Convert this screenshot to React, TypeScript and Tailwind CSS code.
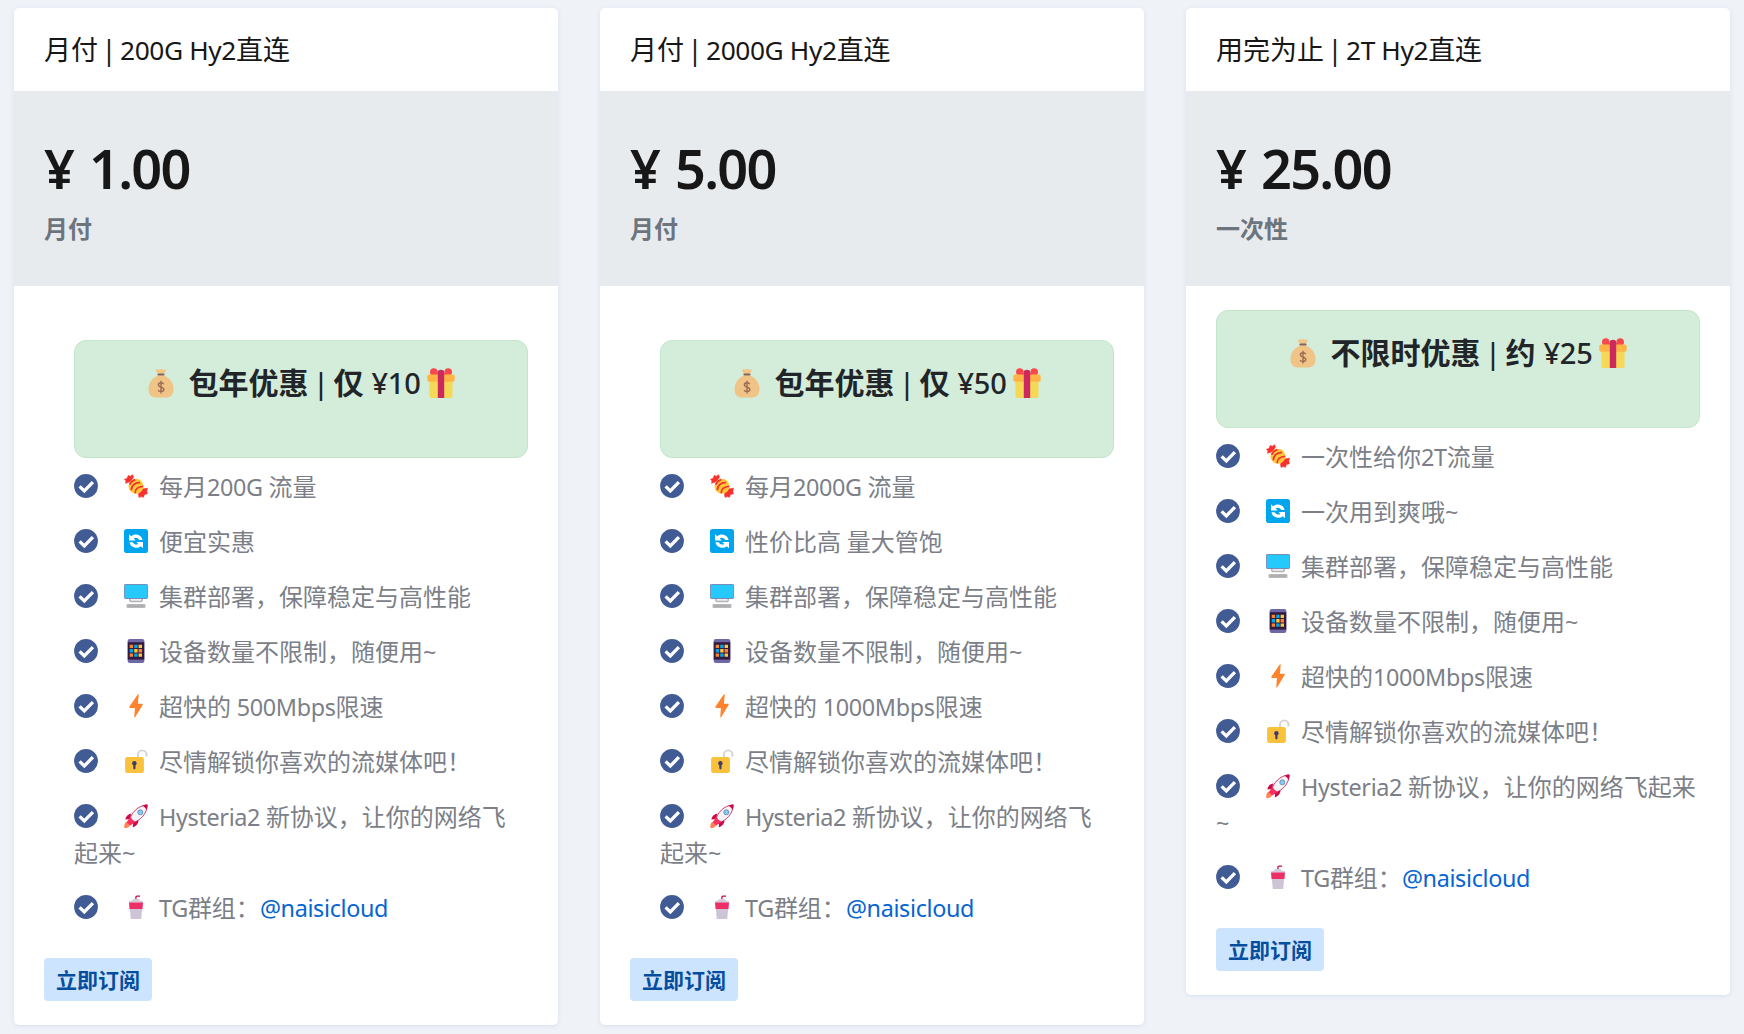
import React from "react";

type EmojiName = "candy" | "cycle" | "desktop" | "phone" | "bolt" | "lock" | "rocket" | "cup";

const CheckIcon = () => (
  <svg viewBox="0 0 24 24" className="inline-block size-6 shrink-0 align-middle">
    <circle cx="12" cy="12" r="11.9" fill="#415b94" />
    <path d="M5.6 12.4 10.3 17l8.6-8.8" fill="none" stroke="#fff" strokeWidth="3.3" />
  </svg>
);

const emojiArt: Record<EmojiName, React.ReactNode> = {
  candy: (
    <>
      <path d="M.5 5.200 3 4.500 4.200 1.500 6.300 2.300 8.500.7 9.500 3 7 7 4 8.600 1.500 9.200 2 7z" fill="#f8312f" strokeLinejoin="round" stroke="#f8312f" strokeWidth=".6" />
      <path d="M15.500 17 18 15l5.500-.8-.7 3 .6 2.600-3 .8-1 2.700-2.400-.7-2 .8-.5-3.400z" fill="#f8312f" strokeLinejoin="round" stroke="#f8312f" strokeWidth=".6" />
      <circle cx="12" cy="12.300" r="7.500" fill="#fcc93a" />
      <path d="M5.600 10.800C6.500 8.300 8.300 6.500 11.200 5.600M7.300 16.200C7.500 11.600 10.500 8.900 16 8.400M11.200 19.200c-.3-4 2.500-6.700 8-6.900" fill="none" stroke="#f8312f" strokeWidth="1.700" />
    </>
  ),
  cycle: (
    <>
      <rect width="24" height="24" rx="2.8" fill="#00a6ed" />
      <path d="M5 5.2 7.2 7.2C10.4 4.5 16 5 18 9.2l.5 1.8h-3.2C14 8.7 11.6 8 9.6 9.3l2 2.1H5z" fill="#fff" />
      <path d="m19 19.2-2.2-2C13.6 19.8 8 19.2 6 15l-.5-1.8h3.2c1.3 2.4 3.7 3 5.7 1.8l-2-2.1H19z" fill="#fff" />
    </>
  ),
  desktop: (
    <>
      <path d="M5 14h14v2.6l-1.2 1.7H6.2L5 16.6z" fill="#b4b4ba" />
      <path d="M6.5 14h11v2.7h-11z" fill="#eeeef2" />
      <rect x=".4" y=".5" width="23.2" height="14" rx=".8" fill="#26c9fc" stroke="#7277a5" strokeWidth=".8" />
      <rect x="2.5" y="20" width="19" height="4" rx="1" fill="#b9b9bb" />
      <path d="M4.5 22h15" stroke="#9b9b9d" strokeDasharray="1.2 .5" />
    </>
  ),
  phone: (
    <>
      <rect x="3.6" y="0" width="16.8" height="24" rx="2.2" fill="#7067a7" />
      <rect x="3.8" y="3.2" width="16.4" height="17.4" fill="#321b41" />
      <path d="M5.7 5.7h3.4v3.4H5.7zM5.7 14.4h3.4v3.4H5.7zM14.6 10h3.4v3.5h-3.4z" fill="#ff822d" />
      <path d="M10.2 5.7h3.4v3.4h-3.4zM5.7 10h3.4v3.5H5.7zM10.2 14.4h3.4v3.4h-3.4z" fill="#00a6ed" />
      <path d="M14.6 5.7H18v3.4h-3.4zM10.2 10h3.4v3.5h-3.4zM14.6 14.4H18v3.4h-3.4z" fill="#fcc93a" />
    </>
  ),
  bolt: <path d="M13.7.6c.5-.7 1-.4 1 .4l-.8 8.7h4c.9 0 1.2.6.7 1.3L11.3 23c-.5.8-1.1.6-1-.3l.6-8.7H6.2c-.9 0-1.2-.6-.7-1.4z" fill="#ff822d" />,
  lock: (
    <>
      <path d="M14 8.5V5.6a4.2 4.2 0 0 1 8.5 0v2" fill="none" stroke="#d3d3d3" strokeWidth="1.9" />
      <rect x="1.1" y="8" width="18.8" height="16" rx="2.2" fill="#f9c23c" />
      <circle cx="10.4" cy="14.3" r="2.2" fill="#433b6b" />
      <rect x="9.3" y="14" width="2.2" height="6.4" rx="1.1" fill="#433b6b" />
    </>
  ),
  rocket: (
    <>
      <path d="M.3 24c-.2-3.500.4-6 2.900-6.500l3 2.900C5.800 23 3.500 24 .3 24z" fill="#ff8257" />
      <path d="M7.300 9.500C4 10 2 12 1.300 15.500l4.600-.4zM14.600 16.600c-.3 3.300-2.300 5.800-5.800 6.900l.3-5.800z" fill="#ca0b4a" />
      <path d="M5.500 16.500C7 9 14 1.300 23 1c.3 8.500-6.500 15.500-14.500 18z" fill="#f4f4f4" stroke="#ca0b4a" strokeWidth=".8" />
      <path d="M18.300 1.800C20 .9 21.700.3 23.600.5c.1 2-.3 3.700-1.100 5.400-.9-1.800-2.200-3.200-4.200-4.100z" fill="#ca0b4a" />
      <path d="m2.800 18.300 3.800-6c.6 2.600 2.500 4.600 5.300 5.400L6.200 21.600z" fill="#f92f60" />
      <circle cx="16.300" cy="8.300" r="2.500" fill="#83cbff" stroke="#6d8ba5" strokeWidth=".9" />
    </>
  ),
  cup: (
    <>
      <path d="M11.9 5V2.2c0-.7.4-1.1 1.1-1.1h3" fill="none" stroke="#ca0b4a" strokeWidth="1.3" />
      <path d="M8.2 5.5C8.6 4.5 9.3 4 10.4 4h3.2c1.1 0 1.8.5 2.2 1.5l3.2.8v1.5H5V6.300z" fill="#d3cbd8" />
      <path d="M5.800 13h12.400l-1 11H6.800z" fill="#cdc4d6" />
      <path d="M5 7.600h14l-.5 6.400h-13z" fill="#ed2f68" />
    </>
  ),
};

const Emoji = ({ name }: { name: EmojiName }) => (
  <svg viewBox="0 0 24 24" className="ml-[26px] mr-[11px] inline-block size-6 align-middle">
    {emojiArt[name]}
  </svg>
);

const MoneyBag = () => (
  <svg viewBox="0 0 30 30" className="mr-[13px] size-[30px] shrink-0">
    <path d="M10.800 1.500c1-.7 1.700.2 2.700 0 1-.2 1.700-1 2.800-.2.800.5 1.500.4 2.600.1 1 0 1.200.8.700 1.600L17.800 6h-5.600L10 3c-.4-.8 0-1.400.8-1.500z" fill="#f1c68a" />
    <path d="M12 7.500h6c5.500 2.300 9.500 7 9.500 13.500 0 6-3 8.500-8 8.500h-9c-5 0-8-2.500-8-8.500C2.500 14.500 6.500 9.800 12 7.500z" fill="#efc486" />
    <path d="M12.500 6.500h5" stroke="#8c6155" strokeWidth="2.200" strokeLinecap="round" />
    <path d="M17.700 16.200c-.4-1-1.300-1.400-2.700-1.400-1.500 0-2.600.8-2.600 2 0 3.100 5.400 1.600 5.400 4.700 0 1.300-1.200 2.100-2.800 2.100-1.500 0-2.500-.6-2.900-1.700M15 12.800v12.800" fill="none" stroke="#9c6b53" strokeWidth="1.400" />
  </svg>
);

const Gift = () => (
  <svg viewBox="0 0 30 30" className="ml-[6px] size-[30px] shrink-0">
    <circle cx="7.800" cy="4" r="3.800" fill="#f8484a" />
    <circle cx="22.200" cy="4" r="3.800" fill="#f8484a" />
    <path d="M8 5h14v3H8z" fill="#f8484a" />
    <path d="M3.500 11h23v17c0 1.300-.7 2-2 2h-19c-1.300 0-2-.7-2-2z" fill="#f6d857" />
    <rect x="1.300" y="6.600" width="27.400" height="7.200" rx="1.800" fill="#ffb545" />
    <path d="M11.800 4c0-3 6.400-3 6.400 0v26h-6.400z" fill="#cb2a5e" />
  </svg>
);

/* Latin runs are set slightly tighter than the Chinese text around them. */
const Mixed = ({ text }: { text: string }) => (
  <>
    {text.split(/([\x20-\x7e¥]+)/).map((part, i) =>
      i % 2 ? (
        <span key={i} className="text-[0.975em] leading-none tracking-[-0.015em] whitespace-pre">
          {part}
        </span>
      ) : (
        part
      )
    )}
  </>
);

type Feature = { icon: EmojiName; text: string; rest?: string; link?: string };
type Plan = {
  title: [string, string];
  price: string;
  period: string;
  promo: [string, string, string];
  nested: boolean;
  features: Feature[];
};

const plans: Plan[] = [
  {
    title: ["月付", "200G Hy2直连"],
    price: "1.00",
    period: "月付",
    promo: ["包年优惠", "仅", "¥10"],
    nested: true,
    features: [
      { icon: "candy", text: "每月200G 流量" },
      { icon: "cycle", text: "便宜实惠" },
      { icon: "desktop", text: "集群部署，保障稳定与高性能" },
      { icon: "phone", text: "设备数量不限制，随便用~" },
      { icon: "bolt", text: "超快的 500Mbps限速" },
      { icon: "lock", text: "尽情解锁你喜欢的流媒体吧！" },
      { icon: "rocket", text: "Hysteria2 新协议，让你的网络飞", rest: "起来~" },
      { icon: "cup", text: "TG群组：", link: "@naisicloud" },
    ],
  },
  {
    title: ["月付", "2000G Hy2直连"],
    price: "5.00",
    period: "月付",
    promo: ["包年优惠", "仅", "¥50"],
    nested: true,
    features: [
      { icon: "candy", text: "每月2000G 流量" },
      { icon: "cycle", text: "性价比高 量大管饱" },
      { icon: "desktop", text: "集群部署，保障稳定与高性能" },
      { icon: "phone", text: "设备数量不限制，随便用~" },
      { icon: "bolt", text: "超快的 1000Mbps限速" },
      { icon: "lock", text: "尽情解锁你喜欢的流媒体吧！" },
      { icon: "rocket", text: "Hysteria2 新协议，让你的网络飞", rest: "起来~" },
      { icon: "cup", text: "TG群组：", link: "@naisicloud" },
    ],
  },
  {
    title: ["用完为止", "2T Hy2直连"],
    price: "25.00",
    period: "一次性",
    promo: ["不限时优惠", "约", "¥25"],
    nested: false,
    features: [
      { icon: "candy", text: "一次性给你2T流量" },
      { icon: "cycle", text: "一次用到爽哦~" },
      { icon: "desktop", text: "集群部署，保障稳定与高性能" },
      { icon: "phone", text: "设备数量不限制，随便用~" },
      { icon: "bolt", text: "超快的1000Mbps限速" },
      { icon: "lock", text: "尽情解锁你喜欢的流媒体吧！" },
      { icon: "rocket", text: "Hysteria2 新协议，让你的网络飞起来", rest: "~" },
      { icon: "cup", text: "TG群组：", link: "@naisicloud" },
    ],
  },
];

const PlanCard = ({ plan }: { plan: Plan }) => (
  <section className="overflow-hidden rounded-[5px] bg-white shadow-[0_1px_4px_rgba(200,210,230,0.6)]">
    <h3 className="flex h-[83px] items-center px-[30px] pt-[2px] text-[27px] font-normal whitespace-nowrap text-[#171717]">
      <span>{plan.title[0]}</span>
      <span className="flex w-[22px] justify-center">|</span>
      <span>
        <Mixed text={plan.title[1]} />
      </span>
    </h3>
    <div className="h-[195px] bg-[#e8ebee] px-[30px] pt-[43px]">
      <p className="flex text-[54px] leading-[68px] font-semibold tracking-[-0.032em] text-[#171717]">
        <span className="w-[45px]">¥</span>
        <span>{plan.price}</span>
      </p>
      <p className="mt-[9px] text-2xl leading-9 font-bold text-[#6c757d]">{plan.period}</p>
    </div>
    <div className="px-[30px] py-6">
      <div className={plan.nested ? "pt-[30px] pl-[30px]" : ""}>
        <div className="flex h-[118px] justify-center rounded-xl border border-[#c3e6cb] bg-[#d4ecda] pt-[27px] text-[30px] leading-[30px] font-bold whitespace-nowrap text-[#212529]">
          <MoneyBag />
          <span>{plan.promo[0]}</span>
          <span className="flex w-[25px] justify-center text-[28px] font-medium">|</span>
          <span>{plan.promo[1]}</span>
          <span className="ml-[8px] text-[29px] font-medium tracking-[-0.01em]">{plan.promo[2]}</span>
          <Gift />
        </div>
        <ul className="mt-[10px] flex flex-col gap-[19px] text-2xl leading-9 text-[#7c7f88]">
          {plan.features.map((f) => (
            <li key={f.icon} className="whitespace-nowrap">
              <div className="flex h-9 items-center">
                <CheckIcon />
                <Emoji name={f.icon} />
                <span className="pt-px">
                  <Mixed text={f.text} />
                  {f.link && (
                    <a href="#" className="text-[#0665d0]">
                      <Mixed text={f.link} />
                    </a>
                  )}
                </span>
              </div>
              {f.rest && (
                <div className="h-9 pt-px">
                  <Mixed text={f.rest} />
                </div>
              )}
            </li>
          ))}
        </ul>
      </div>
      <button className="mt-[33px] block h-[43px] w-[108px] rounded-[4px] bg-[#cde4fe] text-[21px] leading-[44px] font-bold text-[#054d9e]">
        立即订阅
      </button>
    </div>
  </section>
);

export default function App() {
  return (
    <main className="grid h-[1034px] grid-cols-[544px_544px_544px] items-start gap-[42px] overflow-hidden bg-[#eff3f8] pt-2 pl-[14px] font-['Noto_Sans','Noto_Sans_CJK_SC',sans-serif]">
      {plans.map((plan) => (
        <PlanCard key={plan.title[0] + plan.title[1]} plan={plan} />
      ))}
    </main>
  );
}
